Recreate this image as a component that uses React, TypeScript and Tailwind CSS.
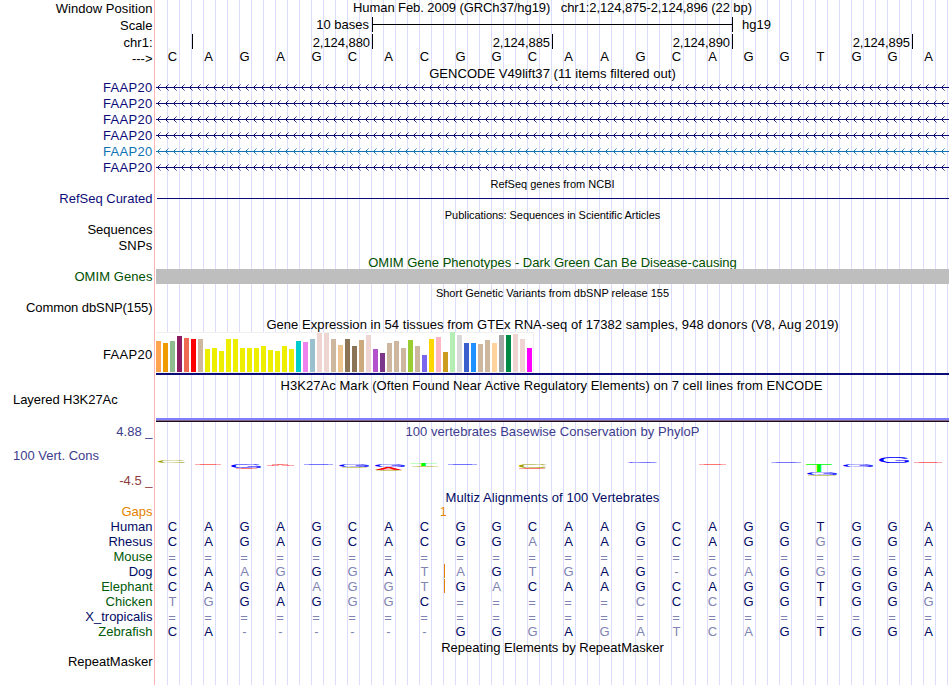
import React from 'react';
import clsx from 'clsx';

const HUMAN = 'CAGAGCACGGCAAGCAGGTGGA';

// lower case = base that differs from the human one, drawn in the muted shade
const species = [
  { name: 'Human', color: 'text-[#000a64]', bases: HUMAN },
  { name: 'Rhesus', color: 'text-[#000a64]', bases: 'CAGAGCACGGaAAGCAGGgGGA' },
  { name: 'Mouse', color: 'text-[#005a0a]', bases: '======================' },
  { name: 'Dog', color: 'text-[#000a64]', bases: 'CAagGgAtaGtgAG-caGgGGA', insert: true },
  { name: 'Elephant', color: 'text-[#005a0a]', bases: 'CAGAaggtGaCAAGCAGGTGGA', insert: true },
  { name: 'Chicken', color: 'text-[#005a0a]', bases: 'tgGAGggC=====cCcGGTGGg' },
  { name: 'X_tropicalis', color: 'text-[#000a64]', bases: '======================' },
  { name: 'Zebrafish', color: 'text-[#005a0a]', bases: 'CA------GGgAgatcaGTGGA' },
];

const transcripts = ['#0c0c78', '#0c0c78', '#0c0c78', '#0c0c78', '#0f73b4', '#0c0c78'];

// [height in px, colour], one entry per tissue
const tissues: [number, string][] = [
  [31, '#ffa54f'], [29, '#ee9a00'], [31, '#8fbc8f'], [36, '#8b1c62'], [34, '#ee6a50'], [33, '#ff0000'],
  [33, '#cdb79e'], [23, '#eeee00'], [24, '#eeee00'], [21, '#eeee00'], [33, '#eeee00'], [33, '#eeee00'],
  [24, '#eeee00'], [24, '#eeee00'], [24, '#eeee00'], [26, '#eeee00'], [22, '#eeee00'], [21, '#eeee00'],
  [26, '#eeee00'], [23, '#eeee00'], [31, '#00cdcd'], [30, '#ee82ee'], [33, '#9ac0cd'], [39, '#eed5d2'],
  [39, '#eed5d2'], [33, '#cdb79e'], [27, '#eec591'], [33, '#8b7355'], [26, '#8b7355'], [32, '#cdaa7d'],
  [37, '#eed5d2'], [23, '#b452cd'], [19, '#7a378b'], [29, '#cdb79e'], [31, '#cdb79e'], [24, '#cdb79e'],
  [32, '#9acd32'], [26, '#cdb79e'], [17, '#7a67ee'], [33, '#ffd700'], [35, '#ffb6c1'], [20, '#cd9b1d'],
  [40, '#b4eeb4'], [37, '#d9d9d9'], [29, '#3a5fcd'], [29, '#1e90ff'], [28, '#cdb79e'], [32, '#cdb79e'],
  [29, '#ffd39b'], [37, '#a6a6a6'], [37, '#008b45'], [38, '#eed5d2'], [33, '#eed5d2'], [24, '#ff00ff'],
];

const BLUE = '#0000ff';
const RED = '#ff0000';
const GREEN = '#00ff00';
const OLIVE = '#a0a000';

// letter, colour, left, right, top, bottom (plot coordinates)
type LogoGlyph = [string, string, number, number, number, number];
const logo: LogoGlyph[] = [
  ['C', OLIVE, 3, 30.5, 38, 40.8],
  ['G', BLUE, 76, 106, 42, 45.7],
  ['G', BLUE, 184.3, 214, 42, 44.9],
  ['G', BLUE, 220, 250, 42, 44.9],
  ['A', RED, 220, 247, 45, 48],
  ['T', GREEN, 255, 282, 42, 43.8],
  ['C', OLIVE, 364, 392, 42, 46],
  ['G', BLUE, 472.5, 502, 39, 40.8],
  ['T', GREEN, 651, 677, 42, 49.8],
  ['G', BLUE, 652, 682, 50, 53],
  ['G', BLUE, 688, 718, 42, 45],
  ['G', BLUE, 724, 754, 34, 41],
];

// scores too close to zero to show a letter: colour, left, right, top
const slivers: [string, number, number, number][] = [
  [RED, 40, 66, 42],
  [RED, 81, 102, 46],
  [RED, 117, 133, 42],
  [RED, 112, 124, 43],
  [RED, 127, 139, 43],
  [BLUE, 149, 178, 42],
  [OLIVE, 187, 212, 45],
  [OLIVE, 221, 247, 48],
  [OLIVE, 257, 283, 44],
  [BLUE, 293, 322, 42],
  [RED, 364, 390, 46],
  [RED, 544, 571, 42],
  [BLUE, 616.5, 646, 40],
  [OLIVE, 653, 681, 53],
  [RED, 759, 787, 40],
];

// ink box of each capital at font size 100: left, right, top, bottom
const ink: Record<string, [number, number, number, number]> = {
  A: [0.5, 66.5, 69, 0],
  C: [5, 68.5, 70, 1],
  G: [5, 71, 70, 1],
  T: [2, 59, 69, 0],
};

type RowProps = {
  className: string;
  label?: string;
  labelClass?: string;
  children?: React.ReactNode;
};

const Row: React.FC<RowProps> = ({ className, label, labelClass, children }) => (
  <div className={clsx('flex w-full shrink-0 items-start', className)}>
    <div className={clsx('w-[155px] shrink-0 pr-[2.5px] text-right', labelClass)}>{label}</div>
    <div className="h-full min-w-0 flex-1">{children}</div>
  </div>
);

const Title: React.FC<{ className?: string; children: React.ReactNode }> = ({ className, children }) => (
  <div className={clsx('pl-px text-center', className)}>{children}</div>
);

const Bases: React.FC<{ bases: string; color: string; muted?: string }> = ({ bases, color, muted }) => (
  <div className="flex">
    {bases.split('').map((b, i) => (
      <span
        key={i}
        className={clsx(
          'w-[36px] shrink-0 text-center',
          b >= 'A' && b <= 'Z' ? color : muted,
          b === '=' ? 'pt-px pr-[2px]' : 'pr-px',
        )}
      >
        {b.toUpperCase()}
      </span>
    ))}
  </div>
);

const Transcript: React.FC<{ color: string; id: string }> = ({ color, id }) => (
  <svg width="793" height="16" className="ml-px block" shapeRendering="crispEdges">
    <defs>
      <pattern id={id} x="1" y="0" width="8" height="16" patternUnits="userSpaceOnUse">
        <g fill={color}>
          <rect x="1" y="6" width="1" height="1" />
          <rect x="1" y="8" width="1" height="1" />
          <rect x="2" y="5" width="1" height="1" opacity="0.8" />
          <rect x="2" y="9" width="1" height="1" opacity="0.8" />
          <rect x="3" y="4" width="1" height="1" opacity="0.5" />
          <rect x="3" y="10" width="1" height="1" opacity="0.5" />
        </g>
      </pattern>
    </defs>
    <rect width="793" height="16" fill={`url(#${id})`} />
    <rect y="7" width="793" height="1" fill={color} />
  </svg>
);

const ConservationLogo: React.FC = () => (
  <svg width="795" height="60" className="block font-['Liberation_Sans',sans-serif]">
    {logo.map(([ch, color, x0, x1, y0, y1], i) => {
      const [l, r, t, b] = ink[ch];
      const sx = (x1 - x0) / (r - l);
      const sy = (y1 - y0) / (t + b);
      return (
        <text key={i} fontSize="100" fill={color} transform={`translate(${x0 - l * sx} ${y0 + t * sy}) scale(${sx} ${sy})`}>
          {ch}
        </text>
      );
    })}
    {slivers.map(([color, x0, x1, y], i) => (
      <g key={i} fill={color}>
        <rect x={x0} y={y} width={x1 - x0} height="1" opacity="0.35" />
        <rect x={x0 + 5} y={y} width={x1 - x0 - 10} height="1" opacity="0.3" />
      </g>
    ))}
  </svg>
);

export default function App() {
  return (
    <div className="h-[685px] w-[950px] overflow-hidden bg-white font-['Liberation_Sans',Arial,sans-serif] text-[13px] leading-[15px] whitespace-pre text-black">
      <div className="relative flex h-full w-[949px] flex-col overflow-hidden">
        {/* base guidelines */}
        <div className="absolute inset-y-0 left-[154px] w-px bg-[#ffb4b4]" />
        <div className="absolute inset-y-0 right-0 left-[156px] bg-[repeating-linear-gradient(to_right,transparent_0,transparent_11px,#dcdcff_11px,#dcdcff_12px)]" />

        <div className="relative flex flex-col">
          <Row className="h-[17px]" label="Window Position" labelClass="pt-px tracking-[0.05px]">
            <Title className="tracking-[-0.08px]">
              {'Human Feb. 2009 (GRCh37/hg19)   chr1:2,124,875-2,124,896 (22 bp)'}
            </Title>
          </Row>
          <Row className="h-[17px]" label="Scale" labelClass="pt-px">
            <div className="flex">
              <div className="w-[217px] pr-[3px] text-right">10 bases</div>
              <div className="h-[15px] w-[361px] border-x border-black pt-[7px]">
                <div className="h-px bg-black" />
              </div>
              <div className="pl-[9px]">hg19</div>
            </div>
          </Row>
          <Row className="h-[15px]" label="chr1:" labelClass="pt-px">
            <div className="flex h-[15px]">
              <div className="w-[38px] border-r border-black" />
              {['2,124,880', '2,124,885', '2,124,890', '2,124,895'].map(pos => (
                <div key={pos} className="w-[180px] border-r border-black pt-px pr-[2px] text-right tracking-[-0.06px]">
                  {pos}
                </div>
              ))}
            </div>
          </Row>
          <Row className="h-[16px]" label="--->" labelClass="pt-[2px]">
            <Bases bases={HUMAN} color="text-black" />
          </Row>

          <Row className="h-[15px]">
            <Title className="pt-px tracking-[0.05px]">GENCODE V49lift37 (11 items filtered out)</Title>
          </Row>
          {transcripts.map((color, i) => (
            <Row
              key={i}
              className="h-[16px]"
              label="FAAP20"
              labelClass={clsx('tracking-[0.3px]', color === '#0c0c78' ? 'text-[#0c0c78]' : 'text-[#0f73b4]')}
            >
              <Transcript color={color} id={`strand-${i}`} />
            </Row>
          ))}

          <Row className="h-[15px]">
            <Title className="pt-px text-[11px]">RefSeq genes from NCBI</Title>
          </Row>
          <Row className="h-[15px]" label="RefSeq Curated" labelClass="text-[#0c0c78]">
            <div className="pt-[7px] pl-[2px]">
              <div className="h-px bg-[#0c0c78]" />
            </div>
          </Row>

          <Row className="h-[16px]">
            <Title className="pt-[2px] text-[11px] tracking-[-0.05px]">Publications: Sequences in Scientific Articles</Title>
          </Row>
          <Row className="h-[16px]" label="Sequences" />
          <Row className="h-[16px]" label="SNPs" labelClass="tracking-[0.2px]" />

          <Row className="h-[15px]">
            <Title className="pt-px text-[#005000]">OMIM Gene Phenotypes - Dark Green Can Be Disease-causing</Title>
          </Row>
          <Row className="h-[15px]" label="OMIM Genes" labelClass="text-[#005000] tracking-[0.08px]">
            <div className="ml-px h-[15px] bg-[#bebebe]" />
          </Row>

          <Row className="h-[16px]">
            <Title className="pt-[2px] text-[11px]">Short Genetic Variants from dbSNP release 155</Title>
          </Row>
          <Row className="h-[16px]" label="Common dbSNP(155)" labelClass="tracking-[-0.08px]" />

          <Row className="h-[16px]">
            <Title className="pt-px tracking-[0.055px]">
              Gene Expression in 54 tissues from GTEx RNA-seq of 17382 samples, 948 donors (V8, Aug 2019)
            </Title>
          </Row>
          <Row className="h-[43px]" label="FAAP20" labelClass="pt-[15px] tracking-[0.3px]">
            <div className="ml-px h-[43px] border-b-2 border-[#0c0c78]">
              <div className="flex h-[41px] w-[378px] items-end gap-[2px] border-t border-r border-b border-[#f0f0f0] bg-white">
                {tissues.map(([height, color], i) => (
                  <div key={i} className="w-[5px] shrink-0" style={{ height, backgroundColor: color }} />
                ))}
              </div>
            </div>
          </Row>

          <Row className="h-[47px]" label="Layered H3K27Ac" labelClass="pt-[17px] pl-[13px] !text-left tracking-[-0.06px]">
            <div className="flex h-full flex-col pl-px">
              <div className="flex-1 pt-[3px] pr-[2px] text-center tracking-[0.05px]">
                H3K27Ac Mark (Often Found Near Active Regulatory Elements) on 7 cell lines from ENCODE
              </div>
              <div className="h-[2px] bg-[#8080ff]" />
              <div className="h-px bg-[#806a8c]" />
              <div className="h-px bg-[#200820]" />
            </div>
          </Row>

          <div className="flex h-[67px]">
            <div className="flex w-[155px] shrink-0 flex-col pt-[2px]">
              <div className="pr-[2.5px] text-right text-[#3c3c8c]">4.88 _</div>
              <div className="pt-[9px] pl-[13px] text-[#3c3c8c]">100 Vert. Cons</div>
              <div className="pt-[10px] pr-[2.5px] text-right text-[#8c3c3c]">-4.5 _</div>
            </div>
            <div className="relative flex-1">
              <Title className="pt-[2px] tracking-[0.04px] text-[#3c3c8c]">
                100 vertebrates Basewise Conservation by PhyloP
              </Title>
              <div className="absolute top-0 left-0">
                <ConservationLogo />
              </div>
            </div>
          </div>

          <Row className="h-[15px]">
            <Title className="pt-px tracking-[0.08px] text-[#000a64]">Multiz Alignments of 100 Vertebrates</Title>
          </Row>
          <Row className="h-[15px]" label="Gaps" labelClass="text-[#e68200]">
            <div className="pt-px pl-[285px] text-[12px] text-[#e68200]">1</div>
          </Row>
          {species.map(s => (
            <Row key={s.name} className="h-[15px]" label={s.name} labelClass={s.color}>
              <div className="relative">
                <Bases bases={s.bases} color="text-[#000a64]" muted="text-[#8084b2]" />
                {s.insert && <div className="absolute top-0 left-[289px] h-[14px] w-px bg-[#e68200]" />}
              </div>
            </Row>
          ))}

          <Row className="h-[15px]">
            <Title className="pt-px">Repeating Elements by RepeatMasker</Title>
          </Row>
          <Row className="h-[31px]" label="RepeatMasker" />
        </div>
      </div>
    </div>
  );
}
